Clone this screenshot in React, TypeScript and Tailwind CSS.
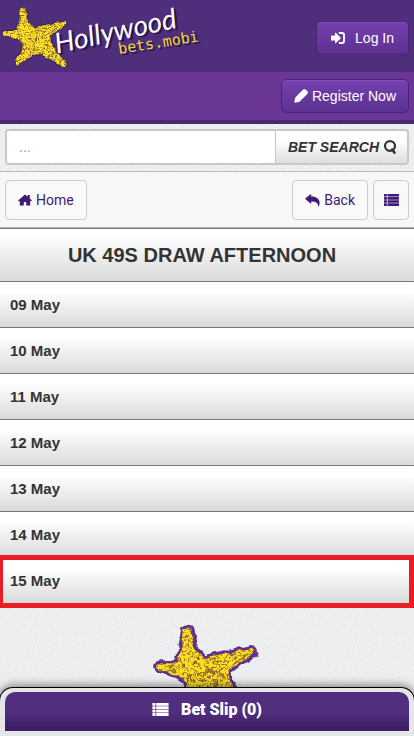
import React from 'react';

const draws = ['09 May', '10 May', '11 May', '12 May', '13 May', '14 May', '15 May'];
const selectedDraw = '15 May';

const STAR =
  'M21 9 Q23 6 25 9 L27 17 L31 25 L34 28 L40 26 L50 24 L65 21 Q69 22 66 26 L57 31 L50 36 L51 42 L57 52 L66 63 Q67 67 63 66 L50 59 L40 54 L34 55 L27 59 L19 65 Q15 66 16 61 L21 51 L22 43 L16 39 L4 35 Q1 32 5 31 L17 31 L19 22 Z';

interface StarProps {
  id: string;
  className: string;
  outline: string;
  scratch: string;
  grain: string;
  outlineWidth: number;
}

const Star: React.FC<StarProps> = ({ id, className, outline, scratch, grain, outlineWidth }) => (
  <svg viewBox="0 0 70 72" className={className} aria-hidden="true">
    <defs>
      <filter id={`${id}-edge`} x="-10%" y="-10%" width="120%" height="120%" colorInterpolationFilters="sRGB">
        <feTurbulence type="fractalNoise" baseFrequency="0.16" numOctaves="2" seed="4" />
        <feDisplacementMap in="SourceGraphic" scale="4" xChannelSelector="R" yChannelSelector="G" />
      </filter>
      <filter id={`${id}-grain`} x="-10%" y="-10%" width="120%" height="120%" colorInterpolationFilters="sRGB">
        <feTurbulence type="fractalNoise" baseFrequency={grain} numOctaves="2" seed="11" result="noise" />
        <feColorMatrix in="noise" values="0 0 0 0 0  0 0 0 0 0  0 0 0 0 0  1 0 0 0 0" />
        {/* keep thin bands of the noise so the marks read as scratches */}
        <feComponentTransfer result="mask">
          <feFuncA type="table" tableValues="0 0 0 0 0 0 0 0.9 0 0 0 0.9 0 0 0 0.9 0 0 0 0 0 0" />
        </feComponentTransfer>
        <feComposite in="SourceGraphic" in2="mask" operator="in" />
      </filter>
    </defs>
    <g filter={`url(#${id}-edge)`}>
      <path d={STAR} fill={outline} stroke={outline} strokeWidth={outlineWidth} strokeLinejoin="round" />
      <path d={STAR} fill="#fbdf20" />
      <path d={STAR} fill={scratch} filter={`url(#${id}-grain)`} />
    </g>
  </svg>
);

const Texture: React.FC = () => (
  <svg className="pointer-events-none absolute inset-0 h-full w-full" aria-hidden="true">
    <filter id="paper">
      <feTurbulence type="fractalNoise" baseFrequency="0.8" numOctaves="2" seed="3" />
      <feColorMatrix values="0 0 0 0 0.5  0 0 0 0 0.5  0 0 0 0 0.55  0.6 0 0 0 -0.25" />
    </filter>
    <rect width="100%" height="100%" filter="url(#paper)" />
  </svg>
);

const Logo: React.FC = () => (
  <a href="#home" aria-label="Hollywoodbets.mobi" className="relative block h-[72px] w-[206px]">
    <Star id="logo" className="absolute top-0 left-0 h-[72px] w-[70px]" outline="#3d2260" scratch="#6b4a3e" grain="0.3" outlineWidth={2} />
    <svg viewBox="0 0 206 72" className="absolute inset-0 h-full w-full" aria-hidden="true">
      <g transform="rotate(-12 59 54)" fontFamily="'Lato', sans-serif" fontSize="28" fontStyle="italic" fontWeight="400">
        <text x="59" y="55" fill="#2c1648">Hollywood</text>
        <text x="57" y="53" fill="#fff">Hollywood</text>
      </g>
      <g transform="rotate(-9 119 54)" fontFamily="'DejaVu Sans Mono', monospace" fontSize="15">
        <text x="121" y="56" fill="#2c1648">bets.mobi</text>
        <text x="119" y="54" fill="#f0d93a">bets.mobi</text>
      </g>
    </svg>
  </a>
);

const LoginIcon: React.FC = () => (
  <svg viewBox="0 0 14 12" className="h-3 w-3.5" aria-hidden="true">
    <path d="M0 4 Q0 3.4 .6 3.4 H4 V1.4 Q4 .3 5 1 L9.6 5.4 Q10.1 6 9.6 6.6 L5 11 Q4 11.7 4 10.6 V8.6 H.6 Q0 8.6 0 8 Z" fill="currentColor" />
    <path d="M8.6 1 H11 Q13 1 13 3 V9 Q13 11 11 11 H8.6" fill="none" stroke="currentColor" strokeWidth="1.9" strokeLinecap="round" />
  </svg>
);

const PencilIcon: React.FC = () => (
  <svg viewBox="0 0 14 14" className="h-3.5 w-3.5" aria-hidden="true">
    <path d="M.8 13.2 L1.6 8.8 L8.2 2 L12 5.8 L5.2 12.4 Z M8.6 1.6 L9.6 .8 Q10.6 .1 11.5 .9 L13.1 2.5 Q13.9 3.4 13.2 4.4 L12.4 5.4 Z" fill="currentColor" stroke="currentColor" strokeWidth="1" strokeLinejoin="round" />
  </svg>
);

const SearchIcon: React.FC = () => (
  <svg viewBox="0 0 14 14" className="h-3.5 w-3.5" aria-hidden="true">
    <ellipse cx="7" cy="6" rx="5" ry="4.8" fill="none" stroke="currentColor" strokeWidth="2.2" />
    <path d="M9.2 9.6 L11.4 12.6" stroke="currentColor" strokeWidth="2.6" strokeLinecap="round" />
  </svg>
);

const HomeIcon: React.FC = () => (
  <svg viewBox="0 0 14 12" className="h-3 w-3.5" aria-hidden="true">
    <path d="M7 .4 L9.6 2.7 V1 H11.8 V4.6 L13.9 6.5 L13.1 7.5 L12.2 6.8 V11.6 H8.2 V8 H5.8 V11.6 H1.8 V6.8 L.9 7.5 L.1 6.5 Z" fill="currentColor" />
  </svg>
);

const BackIcon: React.FC = () => (
  <svg viewBox="0 0 15 13" className="h-[13px] w-[15px]" aria-hidden="true">
    <path d="M0 4.8 L5.6 .2 Q6.2 -.1 6.2 .7 V2.6 C11.4 2.6 14.6 5.2 14.6 9 C14.6 10.8 14 12 13.2 12.8 C13.2 9 11.4 7.4 6.2 7.4 V9.3 Q6.2 10 5.6 9.6 Z" fill="currentColor" />
  </svg>
);

const ListIcon: React.FC<{ className: string }> = ({ className }) => (
  <svg viewBox="0 0 15 12" className={className} fill="currentColor" aria-hidden="true">
    {[0, 3.1, 6.2, 9.3].map((y) => (
      <g key={y}>
        <rect x="0" y={y} width="2.9" height="2.6" rx=".3" />
        <rect x="3.5" y={y} width="11.5" height="2.6" rx=".3" />
      </g>
    ))}
  </svg>
);

const purpleButton =
  'flex items-center rounded-[5px] border border-[#4b2478] bg-gradient-to-b from-[#7540b0] to-[#5c3190] text-sm text-white shadow-[inset_0_1px_0_#8050b8]';
const navButton =
  'flex h-10 items-center justify-center rounded-[4px] border border-[#cccccc] bg-[#f9f9f9] font-[Roboto,sans-serif] text-sm text-[#3f1a75]';

const App: React.FC = () => {
  return (
    <div className="relative flex min-h-screen flex-col overflow-hidden bg-[#f0f1f3] font-['Liberation_Sans',Arial,sans-serif] text-[#333333]">
      <Texture />

      <header className="relative border-b-4 border-[#4a2771]">
        <div className="flex h-[72px] items-center justify-between bg-[#4f2e7b] pr-[5px]">
          <Logo />
          <button type="button" className={`${purpleButton} mt-1 h-[34px] gap-2.5 px-3.5`}>
            <LoginIcon />
            Log In
          </button>
        </div>
        <div className="flex h-12 items-center justify-end bg-[#6a3696] pr-[5px]">
          <button type="button" className={`${purpleButton} h-[34px] gap-1 px-3`}>
            <PencilIcon />
            Register Now
          </button>
        </div>
      </header>

      <form className="relative border-b border-[#bdbdbd] px-[5px] pt-[5px] pb-1.5" onSubmit={(e) => e.preventDefault()}>
        <div className="flex h-9 overflow-hidden rounded-[4px] border-2 border-[#c8c8c8] bg-white">
          <input
            type="text"
            aria-label="Bet search"
            placeholder="..."
            className="min-w-0 flex-1 bg-white px-3 text-sm outline-none placeholder:text-[#999999]"
          />
          <button
            type="submit"
            className="flex items-center gap-1 border-l border-[#c4c4c4] bg-gradient-to-b from-white from-30% to-[#dedede] pr-2.5 pl-3 text-sm font-bold italic"
          >
            BET SEARCH
            <SearchIcon />
          </button>
        </div>
      </form>

      <nav className="relative flex gap-[5px] border-b border-[#b5b5b5] bg-[#f7f7f7] px-[5px] pt-2 pb-[7px]">
        <a href="#home" className={`${navButton} mr-auto gap-1 px-3`}>
          <HomeIcon />
          Home
        </a>
        <a href="#back" className={`${navButton} gap-1 px-3`}>
          <BackIcon />
          Back
        </a>
        <button type="button" aria-label="Menu" className={`${navButton} w-9`}>
          <ListIcon className="h-3 w-[15px]" />
        </button>
      </nav>

      <main className="relative flex flex-1 flex-col">
        <h1 className="flex h-[54px] items-center justify-center border-y border-[#777777] bg-gradient-to-b from-white from-10% to-[#dadada] pr-2.5 text-xl font-bold">
          UK 49S DRAW AFTERNOON
        </h1>
        <ul>
          {draws.map((draw) => (
            <li key={draw}>
              <a
                href="#draw"
                className={
                  draw === selectedDraw
                    ? 'relative -mt-[3px] flex h-[53px] items-center border-[5px] border-l-[3px] border-[#e81e25] bg-gradient-to-b from-white from-20% to-[#dadada] pl-[7px] text-[15px] font-bold'
                    : 'flex h-[46px] items-center border-b border-[#777777] bg-gradient-to-b from-white from-20% to-[#dadada] px-2.5 pt-0.5 text-[15px] font-bold'
                }
              >
                {draw}
              </a>
            </li>
          ))}
        </ul>
        <div className="flex justify-center pt-2 pr-1">
          <Star id="badge" className="h-[110px] w-[107px]" outline="#62318c" scratch="#73462f" grain="0.17" outlineWidth={4} />
        </div>
      </main>

      <footer className="fixed inset-x-0 bottom-0">
        <div className="-mx-px rounded-t-[14px] border-x border-t border-black bg-[#e6e6e8] px-[5px] pt-1 pb-[5px] shadow-[0_-2px_8px_rgba(0,0,0,0.45)]">
          <button
            type="button"
            className="flex h-[39px] w-full items-center justify-center gap-3 rounded-t-[10px] bg-gradient-to-b from-[#512f7e] from-50% to-[#3a1a62] pb-1 font-[Roboto,sans-serif] text-base font-black text-white"
          >
            <ListIcon className="h-[13px] w-[17px]" />
            Bet Slip (0)
          </button>
        </div>
      </footer>
    </div>
  );
};

export default App;
